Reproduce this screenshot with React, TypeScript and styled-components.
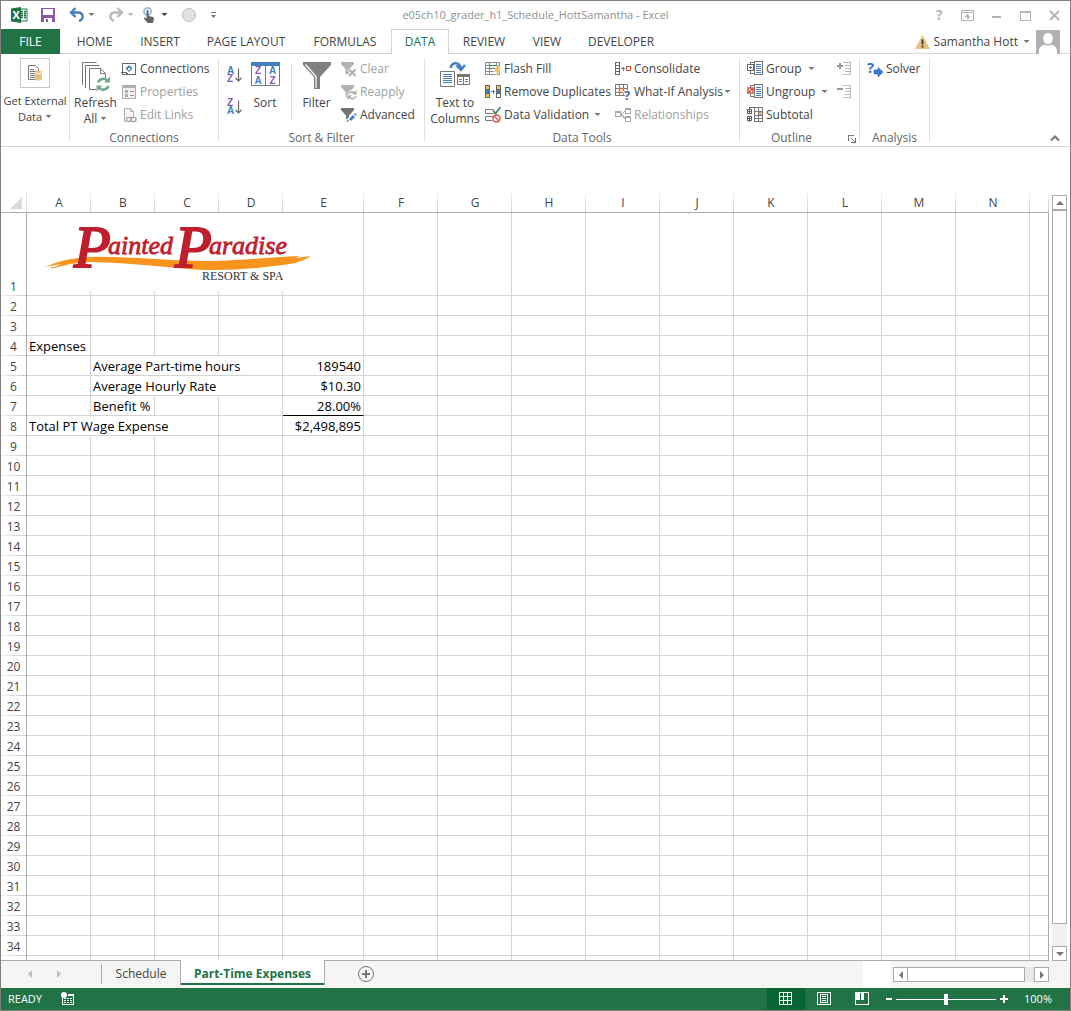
import React from "react";
import styled, { createGlobalStyle, css } from "styled-components";

const ui = `"Open Sans", "Noto Sans", sans-serif`;
const green = "#217346";
const grid = "#d4d4d4";
const edge = "#ababab";

const GlobalStyle = createGlobalStyle`
  *, *::before, *::after { box-sizing: border-box; }
  body { margin: 0; font: 12px/16px ${ui}; color: #444; background: #fff; }
  button { font: inherit; color: inherit; background: none; border: 0; padding: 0; margin: 0; }
  svg { display: block; flex: none; overflow: visible; }
`;

const Window = styled.div`
  height: 100vh;
  display: flex;
  flex-direction: column;
  border: 1px solid #808080;
  overflow: hidden;
`;

/* ---------- title bar ---------- */

const TitleBar = styled.header`
  flex: none;
  height: 28px;
  display: grid;
  grid-template-columns: 1fr auto 1fr;
  align-items: center;
  padding: 0 10px;
`;

const QuickAccess = styled.div<{ $gap?: number }>`
  display: flex;
  align-items: center;
  gap: ${(p) => p.$gap ?? 13}px;
`;

const SplitButton = styled.button`
  display: flex;
  align-items: center;
  gap: 3px;
`;

const Title = styled.h1`
  margin: 0;
  font: inherit;
  font-size: 11px;
  color: #909090;
`;

const WindowControls = styled.div`
  display: flex;
  justify-content: flex-end;
  align-items: center;
  gap: 17px;
`;

/* ---------- tabs ---------- */

const TabStrip = styled.nav`
  flex: none;
  height: 25px;
  display: flex;
  box-shadow: inset 0 -1px #d5d5d5;
`;

const FileTab = styled.button`
  width: 59px;
  margin-right: 2px;
  background: ${green};
  color: #fff;
`;

const Tab = styled.button<{ $width: number; $active?: boolean }>`
  width: ${(p) => p.$width}px;
  ${(p) =>
    p.$active &&
    css`
      color: ${green};
      background: #fff;
      border: 1px solid #d5d5d5;
      border-bottom: 0;
    `}
`;

const Account = styled.div`
  margin-left: auto;
  padding-right: 10px;
  display: flex;
  align-items: center;
  gap: 4px;
`;

const AccountName = styled.button`
  display: flex;
  align-items: center;
  gap: 5px;
  padding-right: 2px;
`;

/* ---------- ribbon ---------- */

const Ribbon = styled.section`
  flex: none;
  height: 93px;
  display: flex;
  padding: 4px 0;
  border-bottom: 1px solid #d5d5d5;
`;

const Group = styled.div<{ $width: number }>`
  width: ${(p) => p.$width}px;
  flex: none;
  display: flex;
  flex-direction: column;
  border-right: 1px solid #e1e1e1;
`;

const GroupBody = styled.div<{ $indent?: number }>`
  display: flex;
  flex: none;
  height: 69px;
  padding-left: ${(p) => p.$indent ?? 0}px;
`;

const GroupLabel = styled.div<{ $launcher?: boolean }>`
  display: flex;
  flex: none;
  align-items: center;
  justify-content: center;
  height: 22px;
  color: #666;
  position: relative;
  padding-right: ${(p) => (p.$launcher ? 16 : 0)}px;
`;

const Launcher = styled.button`
  position: absolute;
  right: 3px;
  top: 8px;
`;

const BigButton = styled.button<{ $width: number; $icon?: number; $small?: boolean }>`
  width: ${(p) => p.$width}px;
  flex: none;
  display: grid;
  grid-template-rows: ${(p) => p.$icon ?? 37}px 16px 16px;
  justify-items: center;
  align-content: start;
  white-space: nowrap;
  ${(p) => p.$small && "font-size: 11px;"}
`;

const IconBox = styled.span`
  width: 30px;
  height: 30px;
  border: 1px solid #c6c6c6;
  display: grid;
  place-items: center;
`;

const IconSlot = styled.span`
  padding-top: 3px;
`;

const WithCaret = styled.span<{ $gap?: number }>`
  display: flex;
  align-items: center;
  gap: ${(p) => p.$gap ?? 3}px;
`;

const Column = styled.div<{ $width?: number; $row?: number }>`
  display: grid;
  grid-auto-rows: ${(p) => p.$row ?? 23}px;
  align-content: start;
  ${(p) => p.$width && `width: ${p.$width}px;`}
`;

const Command = styled.button`
  display: flex;
  align-items: center;
  gap: 3px;
  padding-bottom: 2px;
  white-space: nowrap;
  &:disabled {
    color: #a0a0a0;
  }
`;

const SortCommand = styled(Command)`
  align-items: flex-start;
  padding: 9px 0 0;
`;

const InnerRule = styled.div`
  width: 1px;
  height: 56px;
  margin: 6px 0 0 4px;
  background: #e1e1e1;
`;

const Collapse = styled.button`
  margin: auto 10px 0 auto;
`;

/* ---------- sheet ---------- */

const Workspace = styled.main`
  flex: 1;
  min-height: 0;
  display: flex;
  padding: 46px 3px 0 0;
`;

const SheetView = styled.div`
  flex: 1;
  min-width: 0;
  overflow: hidden;
  position: relative;
  border-bottom: 1px solid ${edge};
  &::after {
    content: "";
    position: absolute;
    inset: 19px 0 0 auto;
    width: 1px;
    background: ${edge};
  }
`;

const Sheet = styled.table`
  width: 100%;
  table-layout: fixed;
  border-collapse: separate;
  border-spacing: 0;
`;

const ColHead = styled.th`
  height: 20px;
  padding: 0;
  font-weight: 400;
  border-bottom: 1px solid ${edge};
  background: linear-gradient(#f2f2f2, #cfcfcf) right / 1px 100% no-repeat;
`;

const Corner = styled(ColHead)`
  background: none;
  border-right: 1px solid #e1e1e1;
  svg { margin-left: auto; margin-right: 4px; }
`;

const RowHead = styled.th`
  padding: 0;
  font-weight: 400;
  vertical-align: bottom;
  line-height: 19px;
  border-right: 1px solid ${edge};
  background: linear-gradient(to right, #f2f2f2, #c8c8c8) bottom / 100% 1px no-repeat;
`;

const Row = styled.tr<{ $height?: number }>`
  height: ${(p) => p.$height ?? 20}px;
`;

const Cell = styled.td<{ $right?: boolean; $total?: boolean }>`
  padding: 2px 2px 0;
  border-right: 1px solid ${grid};
  border-bottom: 1px solid ${(p) => (p.$total ? "#000" : grid)};
  font-size: 13px;
  line-height: 17px;
  color: #000;
  white-space: nowrap;
  text-align: ${(p) => (p.$right ? "right" : "left")};
`;

const LogoCell = styled(Cell)`
  position: relative;
  padding: 0;
`;

const Picture = styled.div`
  position: absolute;
  top: 0;
  left: 0;
  background: #fff;
`;

const VScroll = styled.div`
  width: 15px;
  margin: 2px 0 0 3px;
  display: flex;
  flex-direction: column;
  background: #f1f1f1;
`;

const ScrollButton = styled.button`
  flex: none;
  width: 15px;
  height: 15px;
  border: 1px solid ${edge};
  background: #fff;
  display: grid;
  place-items: center;
`;

const VThumb = styled.div`
  flex: 1;
  margin-bottom: 22px;
  border: 1px solid ${edge};
  background: #fff;
`;

/* ---------- sheet tabs ---------- */

const SheetBar = styled.nav`
  flex: none;
  height: 27px;
  display: flex;
  background: #f5f5f5;
`;

const SheetArrows = styled.div`
  width: 101px;
  height: 20px;
  margin-top: 3px;
  padding: 0 38px 0 25px;
  display: flex;
  align-items: center;
  justify-content: space-between;
  border-right: 1px solid ${edge};
`;

const SheetTab = styled.button<{ $active?: boolean }>`
  width: 78px;
  height: 25px;
  ${(p) =>
    p.$active &&
    css`
      width: 145px;
      margin-top: -1px;
      padding-top: 2px;
      position: relative;
      background: #fff;
      color: ${green};
      font-weight: 700;
      border: solid ${edge};
      border-width: 0 1px;
      box-shadow: inset 0 -2px ${green};
    `}
`;

const AddSheet = styled.button`
  margin-left: 32px;
  height: 25px;
`;

const Splitter = styled.div`
  width: 28px;
  margin: 0 2px 0 auto;
  background: #fff;
`;

const HScroll = styled.div`
  display: flex;
  height: 15px;
  margin: 6px 21px 0 0;
  background: #e8e8e8;
`;

const HThumb = styled.div`
  width: 118px;
  margin: 0 9px 0 -1px;
  border: 1px solid ${edge};
  background: #fff;
`;

/* ---------- status bar ---------- */

const StatusBar = styled.footer`
  flex: none;
  height: 22px;
  display: flex;
  align-items: center;
  background: ${green};
  color: #fff;
  font-size: 11px;
  padding: 0 18px 0 7px;
`;

const Ready = styled.span`
  width: 53px;
`;

const ViewButton = styled.button<{ $active?: boolean }>`
  width: 38px;
  height: 22px;
  display: grid;
  place-items: center;
  background: ${(p) => (p.$active ? "#0a6332" : "none")};
`;

const Views = styled.div`
  display: flex;
  margin-left: auto;
`;

const ZoomRange = styled.input`
  appearance: none;
  width: 100px;
  height: 11px;
  margin: 0 4px;
  background: linear-gradient(#fff, #fff) center / 100% 1px no-repeat;
  &::-webkit-slider-thumb {
    appearance: none;
    width: 4px;
    height: 11px;
    background: #fff;
  }
`;

const ZoomValue = styled.button`
  width: 28px;
  margin-left: 16px;
`;

/* ---------- icons ---------- */

type SvgProps = { w?: number; h?: number; children: React.ReactNode; soft?: boolean };
const Svg = ({ w = 16, h = 16, children, soft }: SvgProps) => (
  <svg width={w} height={h} viewBox={`0 0 ${w} ${h}`} fill="none" shapeRendering={soft ? "auto" : "crispEdges"} aria-hidden>
    {children}
  </svg>
);

const Caret = ({ color = "#777" }: { color?: string }) => (
  <Svg w={7} h={4} soft>
    <path d="M.5 0h6L3.500 3z" fill={color} />
  </Svg>
);

const Arrow = ({ dir, color = "#777" }: { dir: "up" | "down" | "left" | "right"; color?: string }) => {
  const d = { up: "M0 6l4-4 4 4z", down: "M0 2l4 4 4-4z", left: "M6 0L2 4l4 4z", right: "M2 0l4 4-4 4z" }[dir];
  return (
    <Svg w={8} h={8} soft>
      <path d={d} fill={color} />
    </Svg>
  );
};

const ExcelIcon = () => (
  <Svg soft>
    <path d="M8 2h8v12H8z" fill="#fff" stroke={green} />
    <path d="M10 4.500h2M13 4.500h2M10 6.500h2M13 6.500h2M10 8.500h2M13 8.500h2M10 10.500h2M13 10.500h2" stroke={green} strokeWidth="1.300" />
    <path d="M0 1.500L10 0v16L0 14.500z" fill={green} />
    <text x="1.500" y="12" fill="#fff" fontSize="11" fontWeight="700" fontFamily="Open Sans">X</text>
  </Svg>
);

const SaveIcon = () => (
  <Svg>
    <path d="M1 1h14v14H1z" fill="#8a58a8" />
    <path d="M3 2h10v6H3zM4 11h8v4H4z" fill="#fff" />
    <path d="M6 12h2v3H6z" fill="#8a58a8" />
  </Svg>
);

const UndoIcon = () => (
  <Svg soft>
    <path d="M3 5.500h6c6 0 6 7 1 8.500" stroke="#4480bd" strokeWidth="2.400" />
    <path d="M6.500 1L2 5.500 6.500 10" stroke="#4480bd" strokeWidth="2.400" />
  </Svg>
);

const RedoIcon = () => (
  <Svg soft>
    <path d="M13 5.500H7c-6 0-6 7-1 8.500" stroke="#b9b9b9" strokeWidth="2.400" />
    <path d="M9.500 1L14 5.500 9.500 10" stroke="#b9b9b9" strokeWidth="2.400" />
  </Svg>
);

const TouchIcon = () => (
  <Svg soft>
    <circle cx="5.500" cy="4.500" r="3.500" stroke="#9dc0e2" strokeWidth="2" />
    <path d="M4.500 4c0-1.500 2-1.500 2 0v5l4.500 1c1 .3 1 1 .9 2L11 16H5.500L2 11.500c0-1 1-1.500 2.500 0z" fill="#666" />
  </Svg>
);

const RecordIcon = () => (
  <Svg soft>
    <circle cx="8" cy="8" r="6.500" fill="#e4dfe4" stroke="#bdbdbd" />
  </Svg>
);

const CustomizeIcon = () => (
  <Svg w={7} h={8} soft>
    <path d="M1 1.500h5" stroke="#777" />
    <path d="M1 4h5L3.500 7z" fill="#777" />
  </Svg>
);

const RibbonDisplayIcon = () => (
  <Svg w={13} h={11}>
    <path d="M.5.500h12v10H.5zM1 2.500h11" stroke="#b5b5b5" />
    <path d="M6.500 4l3 3h-2v2h-2V7h-2z" fill="#b5b5b5" />
  </Svg>
);

const WarningIcon = () => (
  <Svg w={15} h={14} soft>
    <path d="M7.500 0L15 14H0z" fill="#eac282" />
    <path d="M7.500 4.500v5M7.500 10.500v2" stroke="#444" strokeWidth="2" />
  </Svg>
);

const Avatar = () => (
  <Svg w={24} h={24} soft>
    <path d="M0 0h24v24H0z" fill="#b1b1b1" />
    <ellipse cx="12" cy="8.500" rx="4.800" ry="5.500" fill="#fff" />
    <path d="M3 24v-3c0-4 2.500-5.500 6-6.500 2 1.500 4 1.500 6 0 3.500 1 6 2.500 6 6.500v3z" fill="#fff" />
  </Svg>
);

const ExternalIcon = () => (
  <Svg w={18} h={18} soft>
    <path d="M2.500 1.500h7l3 3v11h-10z" stroke="#777" />
    <path d="M4 5.500h4M4 7.500h6M4 9.500h5M4 11.500h5M4 13.500h5" stroke="#777" />
    <path d="M9 8c0-2 7-2 7 0v7c0 2-7 2-7 0z" fill="#eac282" />
    <path d="M9 8.500c1 1.500 6 1.500 7 0" stroke="#fff" />
  </Svg>
);

const RefreshIcon = () => (
  <Svg w={30} h={31} soft>
    <path d="M1.500 24V1.500h14M4.500 27V4.500h14" stroke="#777" />
    <path d="M15 28.500H8.500v-21h11l5 5V17M19.500 7.500v5h5" stroke="#777" fill="none" />
    <path d="M17 21.500c1.500-4 7-5 10-1.500M27.500 25c-1.500 4-7 5-10 1.500" stroke="#74a98c" strokeWidth="2.500" />
    <path d="M29 15.500v6h-6zM15.500 30.500v-6h6z" fill="#74a98c" />
  </Svg>
);

const ConnectionsIcon = () => (
  <Svg>
    <path d="M1.500 2.500h13v11h-13z" stroke="#666" />
    <path d="M0 11.500h5l2 2" stroke="#666" />
    <path d="M8 4l3.500 3.500L8 11 4.500 7.500z" fill="#4480bd" shapeRendering="auto" />
    <path d="M7 6.500h2v2H7z" fill="#fff" />
  </Svg>
);

const PropertiesIcon = () => (
  <Svg>
    <path d="M1.500 1.500h13v13h-13z" stroke="#b0adb0" fill="#f4eff4" />
    <path d="M1 1h14v3H1z" fill="#b0adb0" />
    <path d="M4 6h3v3H4zM4 10h3v3H4z" fill="#b0adb0" />
    <path d="M9 7.500h4M9 11.500h4" stroke="#999" />
  </Svg>
);

const EditLinksIcon = () => (
  <Svg soft>
    <path d="M5 14.500H3.500V1.500h6l3 3V10M9.500 1.500v3h3" stroke="#b0adb0" fill="#f7f2f7" />
    <rect x="5.500" y="10.500" width="5" height="4" rx="2" stroke="#a5a5a5" strokeWidth="1.400" />
    <rect x="10" y="10.500" width="5" height="4" rx="2" stroke="#a5a5a5" strokeWidth="1.400" />
  </Svg>
);

const Letter = ({ x, y, c }: { x: number; y: number; c: "A" | "Z" }) => (
  <text x={x} y={y} fill={c === "A" ? "#3f7fbf" : "#8a58b0"} fontSize={10} fontWeight="700" fontFamily="Liberation Sans">
    {c}
  </text>
);

const SortIcon = ({ desc }: { desc?: boolean }) => (
  <Svg w={16} h={16} soft>
    <Letter x={0} y={7} c={desc ? "Z" : "A"} />
    <Letter x={0} y={15} c={desc ? "A" : "Z"} />
    <path d="M11.500 1.500v12M8.500 11l3 3 3-3" stroke="#666" strokeWidth="1.200" />
  </Svg>
);

const SortDialogIcon = () => (
  <Svg w={30} h={26} soft>
    <path d="M1.500 1.500h28v23h-28zM15.500 4v20" stroke="#777" />
    <path d="M1 1h29v4H1z" fill="#4480bd" />
    <Letter x={5} y={13} c="Z" />
    <Letter x={4.5} y={23} c="A" />
    <Letter x={19} y={13} c="A" />
    <Letter x={19.5} y={23} c="Z" />
  </Svg>
);

const FilterIcon = () => (
  <Svg w={28} h={28} soft>
    <path d="M0 1h28v3L17 16v12h-6V16L0 4z" fill="#808080" />
    <path d="M2.500 3.500l10.500 12V27" stroke="#fff" strokeWidth="1.200" />
  </Svg>
);

const Funnel = ({ color }: { color: string }) => <path d="M0 1h13v2L8.500 8v6l-4-1V8L0 3z" fill={color} />;

const ClearIcon = () => (
  <Svg soft>
    <Funnel color="#b3b3b3" />
    <path d="M8 8l7 7M15 8l-7 7" stroke="#fff" strokeWidth="4" />
    <path d="M8 8.500l6.500 6.500M14.500 8.500L8 15" stroke="#aaa" strokeWidth="1.800" />
  </Svg>
);

const ReapplyIcon = () => (
  <Svg soft>
    <Funnel color="#b3b3b3" />
    <circle cx="11" cy="11" r="5" fill="#fff" />
    <path d="M7 10.500c1-3 5-4 7-1M15 12c-1 3-5 4-7 1" stroke="#aaa" strokeWidth="1.400" />
    <path d="M15.500 6v4.500H11zM6.500 16v-4.500H11z" fill="#aaa" />
  </Svg>
);

const AdvancedIcon = () => (
  <Svg soft>
    <path d="M0 1h13v2L8 8.500V13l-3-1V8.500L0 3z" fill="#737373" />
    <path d="M6 15.500L14.500 7" stroke="#fff" strokeWidth="5" />
    <path d="M5.500 15.500l1-3 1.500 1.500zM8 12l4-4 2 2-4 4zM13 7l1-1 2 2-1 1z" fill="#4480bd" />
  </Svg>
);

const TextColumnsIcon = () => (
  <Svg w={30} h={26} soft>
    <path d="M.5 10.500h14v15H.5z" stroke="#777" fill="#fff" />
    <path d="M3 13.500h9M3 15.500h9M3 17.500h9M3 19.500h9M3 21.500h9" stroke="#4480bd" />
    <path d="M17.500 13.500h12v10h-12zM23.500 14v9" stroke="#777" fill="#fff" />
    <path d="M17 13h13v3H17z" fill="#777" />
    <path d="M19 18.500h3M25 18.500h3M19 20.500h3M25 20.500h3" stroke="#777" />
    <path d="M10.500 7C12 .5 19.500.500 21 7.500" stroke="#4480bd" strokeWidth="2.400" />
    <path d="M16.500 4.500l4.500 4.500 4-5" stroke="#4480bd" strokeWidth="2.400" />
  </Svg>
);

const FlashFillIcon = () => (
  <Svg soft>
    <path d="M.5 1.500h14v12H.5zM.5 4.500h14M.5 7.500h14M.5 10.500h9M4.500 1.500v12M11.500 1.500v7" stroke="#8a8a8a" />
    <path d="M4.500 4.500h7v3h-7z" fill="#fff" stroke="#3f8a62" />
    <path d="M11 5h5l-2 4h2l-6 7 1.500-5H9z" fill="#eebd6a" stroke="#fff" strokeWidth=".5" />
  </Svg>
);

const RemoveDuplicatesIcon = () => (
  <Svg>
    <path d="M.5 1.500h4v12h-4zM.5 5.500h4M.5 9.500h4" stroke="#666" fill="#4480bd" />
    <path d="M1 2h3v3H1zM1 10h3v3H1z" fill="#eebd6a" />
    <path d="M1 6h3v3H1z" fill="#4480bd" />
    <path d="M11.500 1.500h4v12h-4zM11.500 5.500h4M11.500 9.500h4" stroke="#666" />
    <path d="M12 2h3v3h-3z" fill="#eebd6a" />
    <path d="M12 6h3v3h-3z" fill="#4480bd" />
    <path d="M6 7.500h4M8.500 5.500v4" stroke="#4480bd" />
  </Svg>
);

const ValidationIcon = () => (
  <Svg soft>
    <path d="M9 2.500H.5v4h8M8 9.500H.5v4h7" stroke="#777" />
    <path d="M8 3.500l2.500 3L15.500 0" stroke="#3f8a62" strokeWidth="1.800" />
    <circle cx="11.500" cy="11.500" r="3.500" stroke="#d9573c" strokeWidth="1.400" />
    <path d="M9 9l5 5" stroke="#d9573c" strokeWidth="1.400" />
  </Svg>
);

const ConsolidateIcon = () => (
  <Svg>
    <path d="M.5 1.500h4v12h-4zM.5 4.500h4M.5 7.500h4M.5 10.500h4" stroke="#666" />
    <path d="M6 7.500h4M8.500 5.500v4" stroke="#4480bd" />
    <path d="M11 5h5v5h-5z" fill="#d9573c" />
    <path d="M12 6h3v3h-3z" fill="#fff" />
  </Svg>
);

const WhatIfIcon = () => (
  <Svg soft>
    <path d="M.5.500h12v11H.5zM.5 4.500h12M.5 8.500h12M4.500.500v11M8.500.500v11" stroke="#777" />
    <path d="M4.500 4.500h4v4h-4z" stroke="#e07030" fill="#fff" strokeWidth="1.500" />
    <text x="9" y="15.500" fill="#3f6fb0" stroke="#fff" strokeWidth="2" paintOrder="stroke" fontSize="13" fontWeight="700" fontFamily="Open Sans">?</text>
  </Svg>
);

const RelationshipsIcon = () => (
  <Svg>
    <path d="M.5 4.500h5v5h-5zM10.500 1.500h5v5h-5zM10.500 9.500h5v5h-5z" stroke="#aaa" />
    <path d="M0 4h6v2H0zM10 1h6v2h-6zM10 9h6v2h-6z" fill="#aaa" />
    <path d="M6 7.500l4-3M6 7.500l4 4" stroke="#aaa" />
  </Svg>
);

const OutlineDoc = ({ color }: { color: string }) => (
  <>
    <path d="M7.500.500h8v13h-8z" stroke="#777" />
    <path d="M9 3.500h5M9 5.500h5M9 7.500h5M9 9.500h5M9 11.500h5" stroke={color} />
  </>
);

const GroupIcon = () => (
  <Svg>
    <OutlineDoc color="#4480bd" />
    <path d="M7 1.500H3.500V4M7 12.500H3.500V10" stroke="#777" />
    <path d="M.5 3.500h6v6h-6zM2 6.500h3M3.500 5v3" stroke="#666" />
  </Svg>
);

const UngroupIcon = () => (
  <Svg>
    <OutlineDoc color="#4480bd" />
    <path d="M7 1.500H3.500V4M7 12.500H3.500V10" stroke="#777" />
    <path d="M1 4h5v5H1zM1 9l5-5" stroke="#d9573c" strokeWidth="1.500" fill="#fff" shapeRendering="auto" />
  </Svg>
);

const SubtotalIcon = () => (
  <Svg>
    <path d="M7.500.500h8v14h-8zM7.500 4.500h8M7.500 8.500h8M7.500 11.500h8M11.500.500v14" stroke="#777" />
    <path d="M12 5h3v3h-3z" fill="#e5a97c" />
    <path d="M.5 2.500h4v4h-4zM.5 9.500h4v4h-4zM2.500 3v3M1 4.500h3M2.500 10v3M1 11.500h3M2.500 2V.500H7M2.500 14v1" stroke="#666" />
  </Svg>
);

const DetailIcon = ({ plus }: { plus?: boolean }) => (
  <Svg w={15} h={16}>
    <path d={plus ? "M0 5h6M3 2v6" : "M0 5h6"} stroke="#999" strokeWidth="2" />
    <path d="M6 1.500h8M8 4.500h6M8 7.500h6M8 10.500h6M6 13.500h8M13.500 2v12" stroke="#bbb" />
  </Svg>
);

const SolverIcon = () => (
  <Svg soft>
    <text x="0" y="12" fill="#2f6fd0" fontSize="15" fontWeight="700" fontFamily="Open Sans">?</text>
    <path d="M7 9h4V6.500l5 4.500-5 5V13H7z" fill="#3b78d8" stroke="#2455a8" strokeWidth=".5" />
  </Svg>
);

const LauncherIcon = () => (
  <Svg w={8} h={8}>
    <path d="M.5 6V.500H6M7.500 3v4.500H3M3 3l4 4" stroke="#777" />
  </Svg>
);

const MacroIcon = () => (
  <Svg w={14} h={14}>
    <path d="M1.500 5v7.500h11v-10H7" stroke="#fff" />
    <path d="M7 2h6v2H7z" fill="#fff" />
    <path d="M3 6.500h8M3 8.500h8M3 10.500h8" stroke="#fff" strokeDasharray="2 1" />
    <circle cx="3" cy="3" r="3" fill="#fff" shapeRendering="auto" />
  </Svg>
);

const NormalViewIcon = () => (
  <Svg w={14} h={14}>
    <path d="M.5.500h12v12H.5zM.5 4.500h12M.5 8.500h12M4.500.500v12M8.500.500v12" stroke="#fff" />
  </Svg>
);

const PageViewIcon = () => (
  <Svg w={14} h={14}>
    <path d="M.5.500h13v12H.5zM3.500 2.500h7v8h-7zM5 4.500h4M5 6.500h4M5 8.500h4" stroke="#fff" />
  </Svg>
);

const BreakViewIcon = () => (
  <Svg w={14} h={14}>
    <path d="M.5.500h13v12H.5z" stroke="#fff" />
    <path d="M1 1h4v7H1zM6 1h3v7H6z" fill="#fff" />
  </Svg>
);

const Logo = () => (
  <svg width="310" height="78" viewBox="0 0 310 78" role="img" aria-label="Painted Paradise Resort & Spa">
    <path
      d="M18 54C32 48 46 45 64 44C100 43 135 48 180 48C220 47 246 44 272 43L269 45L284 43C276 49 262 52 246 53C218 57 185 58 160 56C130 53 90 49 62 49C48 49 36 51 24 56L34 51Z"
      fill="#f7941d"
    />
    <path d="M27 51Q40 46 56 46M24 55Q44 49 66 48" stroke="#f7941d" fill="none" />
    <g fill="#be1e2d" stroke="#be1e2d" fontFamily="Liberation Serif" fontStyle="italic">
      <text x="47" y="54" fontSize="60" strokeWidth="2">P</text>
      <text x="81" y="41" fontSize="26" strokeWidth=".8">ainted</text>
      <text x="148" y="54" fontSize="60" strokeWidth="2">P</text>
      <text x="182" y="41" fontSize="26" strokeWidth=".8">aradise</text>
    </g>
    <text x="175" y="67" fontSize="12" fill="#333" fontFamily="Liberation Serif">RESORT &amp; SPA</text>
  </svg>
);

/* ---------- data ---------- */

const tabs: [string, number][] = [
  ["HOME", 65],
  ["INSERT", 66],
  ["PAGE LAYOUT", 106],
  ["FORMULAS", 92],
  ["DATA", 58],
  ["REVIEW", 70],
  ["VIEW", 56],
  ["DEVELOPER", 92],
];

const columns: [string, number][] = [
  ["A", 64], ["B", 64], ["C", 64], ["D", 64], ["E", 81],
  ["F", 74], ["G", 74], ["H", 74], ["I", 74], ["J", 74], ["K", 74], ["L", 74], ["M", 74], ["N", 74],
];

type CellData = { text: React.ReactNode; span?: number; right?: boolean; total?: boolean };

const cells: Record<string, CellData> = {
  A4: { text: "Expenses" },
  B5: { text: "Average Part-time hours", span: 3 },
  E5: { text: "189540", right: true },
  B6: { text: "Average Hourly Rate", span: 3 },
  E6: { text: "$10.30", right: true },
  B7: { text: "Benefit %" },
  E7: { text: "28.00%", right: true, total: true },
  A8: { text: "Total PT Wage Expense", span: 3 },
  E8: { text: "$2,498,895", right: true },
};

const rowCount = 35;

const SheetRow = ({ n }: { n: number }) => {
  const out: React.ReactNode[] = [];
  for (let i = 0; i < columns.length; ) {
    const key = columns[i][0] + n;
    const c = cells[key];
    if (key === "A1") {
      out.push(
        <LogoCell key={key}>
          <Picture><Logo /></Picture>
        </LogoCell>
      );
    } else {
      out.push(
        <Cell key={key} colSpan={c?.span} $right={c?.right} $total={c?.total}>{c?.text}</Cell>
      );
    }
    i += c?.span ?? 1;
  }
  return (
    <Row $height={n === 1 ? 83 : 20}>
      <RowHead scope="row">{n <= 34 ? n : null}</RowHead>
      {out}
      <Cell />
    </Row>
  );
};

export default function App() {
  return (
    <>
      <GlobalStyle />
      <Window>
        <TitleBar>
          <QuickAccess>
            <ExcelIcon />
            <button aria-label="Save"><SaveIcon /></button>
            <SplitButton aria-label="Undo"><UndoIcon /><Caret /></SplitButton>
            <QuickAccess $gap={8}>
              <SplitButton aria-label="Redo"><RedoIcon /><Caret color="#bbb" /></SplitButton>
              <SplitButton aria-label="Touch mode"><TouchIcon /><Caret color="#444" /></SplitButton>
            </QuickAccess>
            <button aria-label="Record"><RecordIcon /></button>
            <button aria-label="Customize toolbar"><CustomizeIcon /></button>
          </QuickAccess>
          <Title>e05ch10_grader_h1_Schedule_HottSamantha - Excel</Title>
          <WindowControls>
            <button aria-label="Help">
              <Svg w={8} h={14} soft><text x="0" y="12" fontSize="14" fontWeight="700" fontFamily="Open Sans" fill="#b5b5b5">?</text></Svg>
            </button>
            <button aria-label="Ribbon display"><RibbonDisplayIcon /></button>
            <button aria-label="Minimize"><Svg w={12} h={11}><path d="M1 6h9v2H1z" fill="#b5b5b5" /></Svg></button>
            <button aria-label="Maximize">
              <Svg w={12} h={11}><path d="M.5 1h10v9H.5zM0 2h11" stroke="#b5b5b5" /></Svg>
            </button>
            <button aria-label="Close">
              <Svg w={11} h={11} soft><path d="M1 1l9 9M10 1l-9 9" stroke="#b5b5b5" strokeWidth="2" /></Svg>
            </button>
          </WindowControls>
        </TitleBar>

        <TabStrip>
          <FileTab>FILE</FileTab>
          {tabs.map(([name, w]) => (
            <Tab key={name} $width={w} $active={name === "DATA"}>{name}</Tab>
          ))}
          <Account>
            <WarningIcon />
            <AccountName>Samantha Hott <Caret /></AccountName>
            <Avatar />
          </Account>
        </TabStrip>

        <Ribbon>
          <Group $width={69}>
            <BigButton $width={68} $icon={35} $small>
              <IconBox><ExternalIcon /></IconBox>
              <span>Get External</span>
              <WithCaret>Data <Caret /></WithCaret>
            </BigButton>
          </Group>

          <Group $width={149}>
            <GroupBody>
              <BigButton $width={51}>
                <IconSlot><RefreshIcon /></IconSlot>
                <span>Refresh</span>
                <WithCaret>All <Caret /></WithCaret>
              </BigButton>
              <Column>
                <Command><ConnectionsIcon />Connections</Command>
                <Command disabled><PropertiesIcon />Properties</Command>
                <Command disabled><EditLinksIcon />Edit Links</Command>
              </Column>
            </GroupBody>
            <GroupLabel>Connections</GroupLabel>
          </Group>

          <Group $width={206}>
            <GroupBody $indent={8}>
              <Column $width={16} $row={32}>
                <SortCommand aria-label="Sort A to Z"><SortIcon /></SortCommand>
                <SortCommand aria-label="Sort Z to A"><SortIcon desc /></SortCommand>
              </Column>
              <BigButton $width={44}>
                <IconSlot><SortDialogIcon /></IconSlot>
                <span>Sort</span>
              </BigButton>
              <InnerRule />
              <BigButton $width={49}>
                <IconSlot><FilterIcon /></IconSlot>
                <span>Filter</span>
              </BigButton>
              <Column>
                <Command disabled><ClearIcon />Clear</Command>
                <Command disabled><ReapplyIcon />Reapply</Command>
                <Command><AdvancedIcon />Advanced</Command>
              </Column>
            </GroupBody>
            <GroupLabel>Sort &amp; Filter</GroupLabel>
          </Group>

          <Group $width={315}>
            <GroupBody>
              <BigButton $width={60}>
                <IconSlot><TextColumnsIcon /></IconSlot>
                <span>Text to</span>
                <span>Columns</span>
              </BigButton>
              <Column $width={130}>
                <Command><FlashFillIcon />Flash Fill</Command>
                <Command><RemoveDuplicatesIcon />Remove Duplicates</Command>
                <Command><ValidationIcon /><WithCaret $gap={5}>Data Validation <Caret /></WithCaret></Command>
              </Column>
              <Column>
                <Command><ConsolidateIcon />Consolidate</Command>
                <Command><WhatIfIcon /><WithCaret $gap={1}>What-If Analysis <Caret /></WithCaret></Command>
                <Command disabled><RelationshipsIcon />Relationships</Command>
              </Column>
            </GroupBody>
            <GroupLabel>Data Tools</GroupLabel>
          </Group>

          <Group $width={120}>
            <GroupBody $indent={7}>
              <Column $width={90}>
                <Command><GroupIcon /><WithCaret $gap={6}>Group <Caret /></WithCaret></Command>
                <Command><UngroupIcon /><WithCaret $gap={6}>Ungroup <Caret /></WithCaret></Command>
                <Command><SubtotalIcon />Subtotal</Command>
              </Column>
              <Column>
                <Command disabled aria-label="Show detail"><DetailIcon plus /></Command>
                <Command disabled aria-label="Hide detail"><DetailIcon /></Command>
              </Column>
            </GroupBody>
            <GroupLabel $launcher>
              <span>Outline</span>
              <Launcher aria-label="Outline settings"><LauncherIcon /></Launcher>
            </GroupLabel>
          </Group>

          <Group $width={70}>
            <GroupBody $indent={7}>
              <Column>
                <Command><SolverIcon />Solver</Command>
              </Column>
            </GroupBody>
            <GroupLabel>Analysis</GroupLabel>
          </Group>

          <Collapse aria-label="Collapse ribbon">
            <Svg w={10} h={7} soft><path d="M1 5.500l4-4 4 4" stroke="#777" strokeWidth="2" /></Svg>
          </Collapse>
        </Ribbon>

        <Workspace>
          <SheetView>
            <Sheet>
              <colgroup>
                <col width={26} />
                {columns.map(([name, w]) => <col key={name} width={w} />)}
                <col />
              </colgroup>
              <thead>
                <tr>
                  <Corner><Svg w={12} h={12} soft><path d="M12 0v12H0z" fill="#d9d9d9" /></Svg></Corner>
                  {columns.map(([name]) => <ColHead key={name} scope="col">{name}</ColHead>)}
                  <ColHead />
                </tr>
              </thead>
              <tbody>
                {Array.from({ length: rowCount }, (_, i) => <SheetRow key={i} n={i + 1} />)}
              </tbody>
            </Sheet>
          </SheetView>
          <VScroll>
            <ScrollButton aria-label="Scroll up"><Arrow dir="up" /></ScrollButton>
            <VThumb />
            <ScrollButton aria-label="Scroll down"><Arrow dir="down" /></ScrollButton>
          </VScroll>
        </Workspace>

        <SheetBar>
          <SheetArrows>
            <button aria-label="Previous sheet"><Arrow dir="left" color="#c0c0c0" /></button>
            <button aria-label="Next sheet"><Arrow dir="right" color="#c0c0c0" /></button>
          </SheetArrows>
          <SheetTab>Schedule</SheetTab>
          <SheetTab $active>Part-Time Expenses</SheetTab>
          <AddSheet aria-label="New sheet">
            <Svg w={18} h={18} soft>
              <circle cx="9" cy="9" r="7.500" stroke="#777" />
              <path d="M9 5v8M5 9h8" stroke="#777" strokeWidth="2" />
            </Svg>
          </AddSheet>
          <Splitter />
          <HScroll>
            <ScrollButton aria-label="Scroll left"><Arrow dir="left" /></ScrollButton>
            <HThumb />
            <ScrollButton aria-label="Scroll right"><Arrow dir="right" /></ScrollButton>
          </HScroll>
        </SheetBar>

        <StatusBar>
          <Ready>READY</Ready>
          <button aria-label="Record macro"><MacroIcon /></button>
          <Views>
            <ViewButton $active aria-label="Normal view"><NormalViewIcon /></ViewButton>
            <ViewButton aria-label="Page layout view"><PageViewIcon /></ViewButton>
            <ViewButton aria-label="Page break view"><BreakViewIcon /></ViewButton>
          </Views>
          <button aria-label="Zoom out"><Svg w={11} h={8}><path d="M5 3h6v2H5z" fill="#fff" /></Svg></button>
          <ZoomRange type="range" min={10} max={190} defaultValue={100} aria-label="Zoom" />
          <button aria-label="Zoom in"><Svg w={8} h={8}><path d="M0 3h8v2H0zM3 0h2v8H3z" fill="#fff" /></Svg></button>
          <ZoomValue>100%</ZoomValue>
        </StatusBar>
      </Window>
    </>
  );
}
